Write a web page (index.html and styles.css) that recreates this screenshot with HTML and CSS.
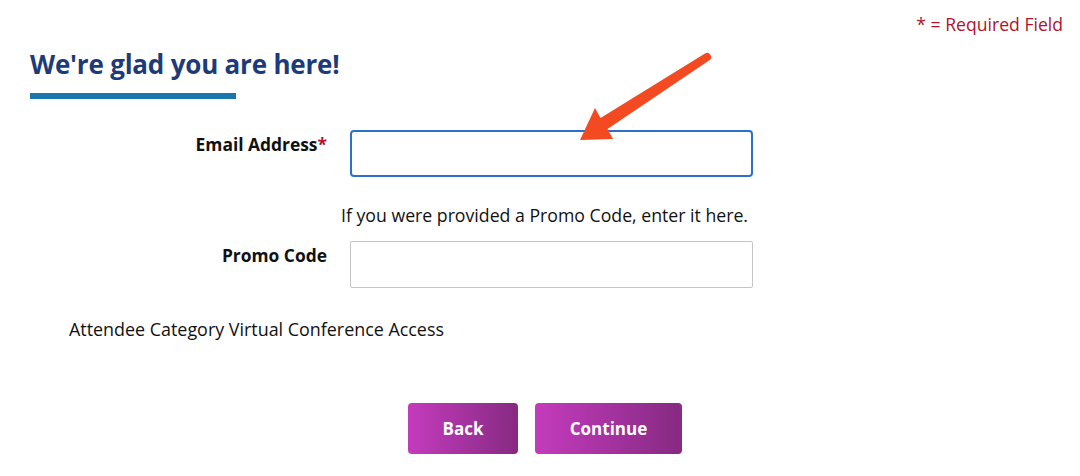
FILE: index.html
```html
<!DOCTYPE html>
<html lang="en">
<head>
    <meta charset="UTF-8">
    <meta name="viewport" content="width=device-width, initial-scale=1.0">
    <title>Registration</title>
    <link rel="stylesheet" href="styles.css">
</head>
<body>
    <div class="required-note">* = Required Field</div>
    <h2 class="page-title">We're glad you are here!</h2>
    <div class="title-bar"></div>
    <form class="reg-form">
        <div class="form-row">
            <label for="email">Email Address<span class="star">*</span></label>
            <input type="text" id="email" class="input-active">
        </div>
        <p class="promo-hint">If you were provided a Promo Code, enter it here.</p>
        <div class="form-row">
            <label for="promo">Promo Code</label>
            <input type="text" id="promo">
        </div>
        <p class="category">Attendee Category Virtual Conference Access</p>
        <div class="buttons">
            <button type="button" class="btn btn-back">Back</button>
            <button type="button" class="btn btn-continue">Continue</button>
        </div>
    </form>
    <svg class="pointer-arrow" width="1080" height="476" viewBox="0 0 1080 476">
        <path d="M705 53.5 L600.5 118 L595 108 L580 140 L613 139 L607.5 129 L709 60.5 A4 4 0 0 0 705 53.5 Z" fill="#f44a22"/>
    </svg>
</body>
</html>
```

FILE: styles.css
```css
body {
    font-family: "Open Sans", Arial, sans-serif;
    background-color: #ffffff;
    color: #111111;
    margin: 0;
    padding: 0;
    position: relative;
}
.required-note {
    text-align: right;
    color: #b0132b;
    font-size: 17.6px;
    line-height: 24px;
    padding: 12px 17px 0 0;
    height: 24px;
}
.page-title {
    margin: 10px 0 0 30px;
    font-size: 26px;
    font-weight: 700;
    color: #1d3b78;
    letter-spacing: -0.2px;
}
.title-bar {
    width: 206px;
    height: 6px;
    background-color: #1b76ab;
    margin: 11px 0 0 30px;
}
.reg-form {
    margin-top: 31px;
}
.form-row {
    display: grid;
    grid-template-columns: 327px 403px;
    column-gap: 23px;
    align-items: start;
}
.form-row label {
    text-align: right;
    font-weight: 700;
    font-size: 17.4px;
    line-height: 24px;
    padding-top: 2px;
}
.star {
    color: #b0132b;
}
.form-row input {
    height: 47px;
    box-sizing: border-box;
    border: 1px solid #c4c4c4;
    border-radius: 2px;
    font-size: 16px;
    padding: 0 10px;
    outline: none;
}
.form-row .input-active {
    border: 2px solid #2d6fcc;
    border-radius: 4px;
}
.promo-hint {
    margin: 26px 0 14px 341px;
    font-size: 17.7px;
    line-height: 24px;
}
.category {
    margin: 29px 0 0 69px;
    font-size: 17.9px;
    line-height: 24px;
}
.buttons {
    display: flex;
    gap: 17px;
    margin: 62px 0 0 408px;
}
.btn {
    height: 51px;
    border: none;
    border-radius: 4px;
    color: white;
    font-family: inherit;
    font-weight: 700;
    font-size: 17px;
    background: linear-gradient(to right, #c43bbd, #862a82);
    cursor: pointer;
}
.btn-back {
    width: 110px;
}
.btn-continue {
    width: 147px;
}
.pointer-arrow {
    position: absolute;
    top: 0;
    left: 0;
    pointer-events: none;
}
```
